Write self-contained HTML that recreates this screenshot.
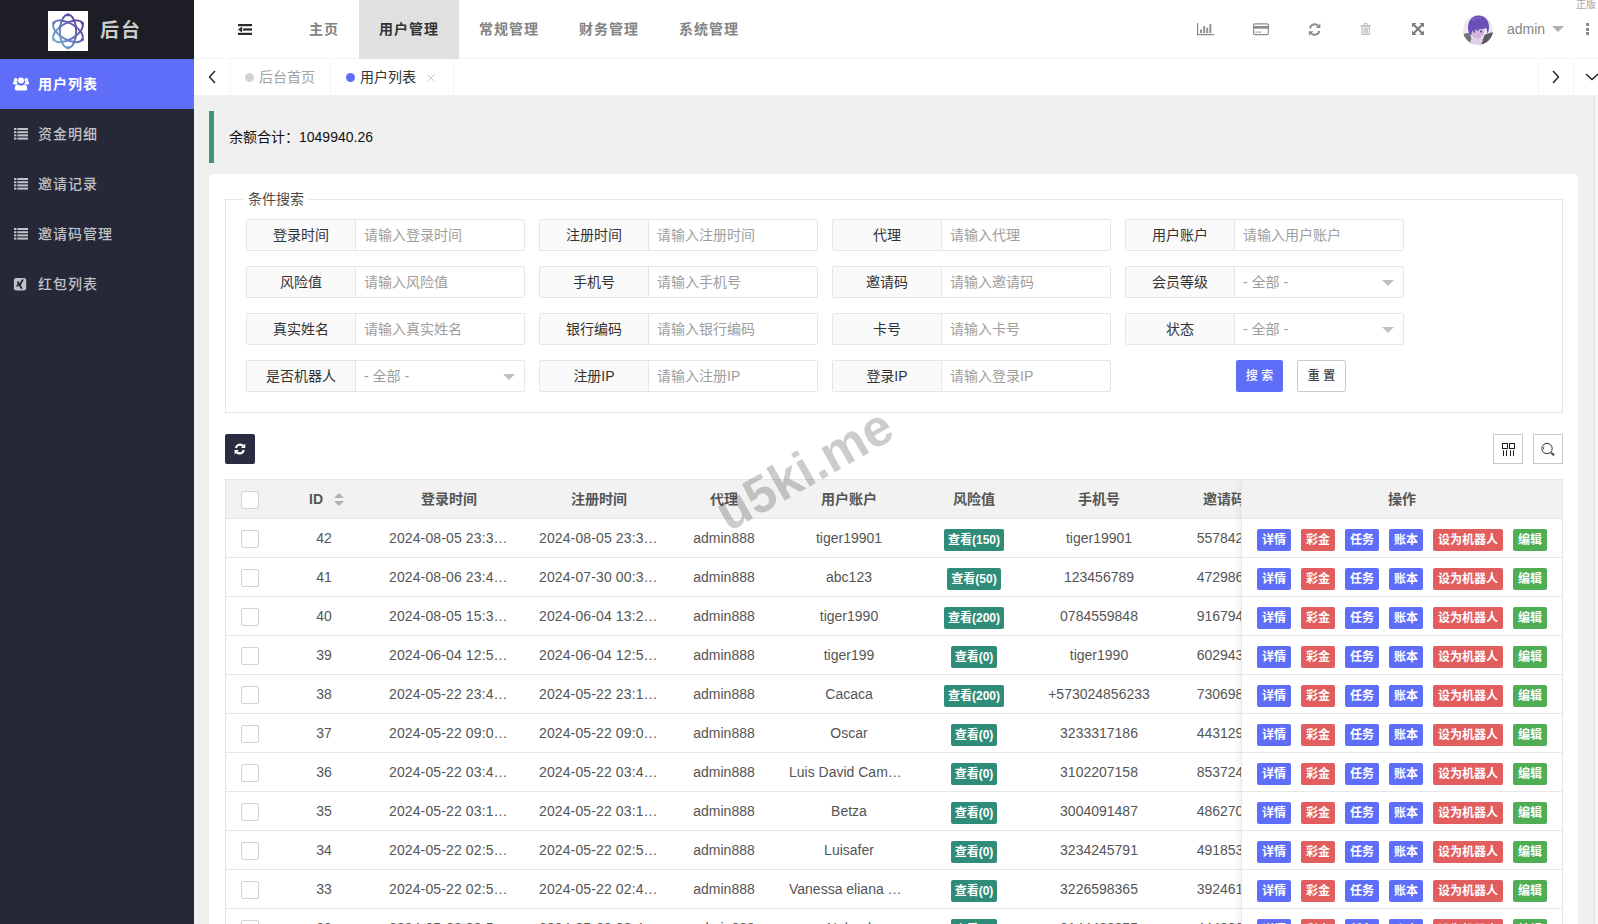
<!DOCTYPE html>
<html lang="zh-CN">
<head>
<meta charset="utf-8">
<title>后台</title>
<style>
*{box-sizing:border-box;margin:0;padding:0}
html,body{width:1598px;height:924px;overflow:hidden;background:#f0f0f0}
body{font-family:"Liberation Sans","Noto Sans CJK SC",sans-serif;font-size:14px;color:#333;position:relative}
svg{display:block;overflow:visible}
/* sidebar */
#side{position:absolute;left:0;top:0;width:194px;height:924px;background:#262837}
#logo{position:absolute;left:0;top:0;width:194px;height:59px;background:#1c1d25}
#logo .img{position:absolute;left:48px;top:11px;width:40px;height:40px;background:#fff}
#logo .txt{position:absolute;left:100px;top:1px;line-height:59px;font-size:19px;font-weight:bold;color:#cdcdcd;letter-spacing:2px}
.mi{position:absolute;left:0;width:194px;height:50px;line-height:50px;color:#c0c1c7;font-size:14px;font-weight:500;letter-spacing:1px;padding-left:38px}
.mi.on{background:#5f6ef8;color:#fff;font-weight:bold}
.mi svg{position:absolute;left:13px;top:17px}
/* header */
#head{position:absolute;left:194px;top:0;width:1415px;height:59px;background:#fff;border-bottom:1px solid #f4f4f4}
.nv{position:absolute;top:0;height:59px;line-height:58px;text-align:center;font-weight:bold;color:#838383;letter-spacing:1px;font-size:14px}
.nv.on{background:#e0e0e0;color:#333}
.hi{position:absolute;top:23px}
#avatar{position:absolute;left:1269px;top:15px;width:30px;height:30px;border-radius:50%;overflow:hidden}
#uname{position:absolute;left:1313px;top:0;line-height:58px;font-size:14px;color:#858585}
#ucaret{position:absolute;left:1358px;top:26px;width:0;height:0;border:6px solid transparent;border-top-color:#b0b0b0;border-bottom-width:0}
#more{position:absolute;left:1392px;top:23px;width:3px}
#more i{display:block;width:3px;height:3px;background:#8a8a8a;margin-bottom:1.5px}
#zb{position:absolute;left:1382px;top:-2px;font-size:10px;line-height:14px;color:#a5a5a5;white-space:nowrap}
#tabs{position:absolute;left:194px;top:59px;width:1415px;height:36px;background:#fff}
#tabs .cell{position:absolute;top:0;height:36px;line-height:36px;border-right:1px solid #f6f6f6;font-size:14px;white-space:nowrap}
#tabs .cell svg{position:absolute}
#tabs .dot{display:inline-block;width:9px;height:9px;border-radius:50%;vertical-align:middle;margin-right:5px;position:relative;top:-1px}
#tabs .x{position:absolute;left:91px;top:1px;font-size:13px;color:#c4c4c4}
/* content */
#quote{position:absolute;left:209px;top:111px;width:1369px;height:52px;border-left:5px solid #3d9580;line-height:52px;padding-left:15px;font-size:14px;color:#111}
#card{position:absolute;left:209px;top:174px;width:1369px;height:800px;background:#fff;border-radius:4px}
#fs{position:absolute;left:16px;top:25px;width:1338px;height:214px;border:1px solid #e6e6e6}
#fs .lg{position:absolute;left:17px;top:-11px;background:#fff;padding:0 5px;font-size:14px;line-height:20px;color:#4a4a4a}
.fi{position:absolute;width:279px;height:32px;border:1px solid #e6e6e6;border-radius:2px;background:#fff}
.fi .lb{position:absolute;left:0;top:0;width:109px;height:30px;line-height:30px;text-align:center;background:#fafafa;border-right:1px solid #e6e6e6;color:#333;font-size:14px}
.fi .ip{position:absolute;left:109px;top:0;width:168px;height:30px;line-height:30px;padding-left:8px;color:#9e9e9e;font-size:14px;white-space:nowrap}
.fi .ar{position:absolute;right:9px;top:13px;width:0;height:0;border:6px solid transparent;border-top-color:#c0c0c0;border-bottom-width:0}
.btn{position:absolute;height:32px;line-height:32px;text-align:center;font-size:12px;font-weight:500;border-radius:2px;white-space:nowrap}
.b1{background:#5f6ef8;color:#fff}
.b2{background:#fff;border:1px solid #c9c9c9;color:#444;line-height:30px}
/* toolbar */
#tools{position:absolute;left:16px;top:260px;width:1338px;height:30px}
#tools .rb{position:absolute;left:0;top:0;width:30px;height:30px;background:#2a2d42;border-radius:2px}
#tools .rb svg{position:absolute;left:8.800px;top:8.600px}
#tools .tb{position:absolute;top:0;width:30px;height:30px;border:1px solid #c9c9c9;background:#fff}
#tools .tb svg{position:absolute}
/* table */
#tbl{position:absolute;left:16px;top:305px;width:1338px;height:500px;border:1px solid #e6e6e6;border-right:0;overflow:hidden}
.th{position:absolute;left:0;top:0;width:1400px;height:39px;background:#f2f2f2;border-bottom:1px solid #e6e6e6;font-weight:bold;color:#555}
.tr{position:absolute;left:0;width:1400px;height:39px;border-bottom:1px solid #e6e6e6;color:#555}
.c{position:absolute;top:0;height:38px;line-height:38px;text-align:center;font-size:14px;white-space:nowrap;overflow:hidden}
.cb{display:inline-block;width:18px;height:18px;border:1px solid #d2d2d2;border-radius:2px;background:#fff;vertical-align:middle;position:relative;top:0}
.sort{display:inline-block;position:relative;width:10px;height:14px;margin-left:11px;vertical-align:middle;top:0}
.sort i{position:absolute;left:0;width:0;height:0;border:5px solid transparent}
.sort .u{top:-5px;border-bottom-color:#b2b2b2}
.sort .d{top:8px;border-top-color:#b2b2b2}
.xb{display:inline-block;height:22px;line-height:22px;padding:0 5px;font-size:12px;color:#fff;border-radius:2px;vertical-align:middle;font-weight:bold}
.tl{padding:0 4px;position:relative;top:1px}
.tl{background:#2f8c78}
.inv{padding-right:8px}
.c.tc{text-align:left;padding-left:15px}
.c.dt{letter-spacing:.12px}
.bl{background:#5f6ef8}
.rd{background:#e25d5d}
.gr{background:#4fae54}
#fix{position:absolute;left:1015px;top:0;width:322px;height:500px;background:#fff;border-left:1px solid #e6e6e6;border-right:1px solid #e6e6e6;box-shadow:-1px 0 8px rgba(0,0,0,.08)}
#fix .th,#fix .tr{width:320px}
.ops{position:absolute;left:15px;top:10px;height:22px;white-space:nowrap;font-size:0}
.ops .xb{margin-right:10px;display:inline-block;vertical-align:top}
#wm{position:absolute;left:654px;top:439px;width:300px;height:60px;line-height:60px;text-align:center;font-size:52px;font-weight:bold;color:rgba(0,0,0,.2);transform:rotate(-29.5deg);transform-origin:center center;white-space:nowrap}
#sbar{position:absolute;left:1594px;top:95px;width:4px;height:829px;background:#f7f7f7;border-left:1px solid #e4e4e4}
</style>
</head>
<body>
<div id="side">
  <div id="logo"><div class="img"><svg width="40" height="40" viewBox="0 0 40 40"><defs><linearGradient id="lg1" gradientUnits="userSpaceOnUse" x1="4" y1="36" x2="36" y2="6"><stop offset="0" stop-color="#7fc4d4"/><stop offset=".45" stop-color="#5f73bd"/><stop offset="1" stop-color="#5a3193"/></linearGradient><mask id="lm"><g fill="none" stroke="#fff" stroke-width="1.900"><ellipse cx="20" cy="20.300" rx="16.500" ry="8.200" transform="rotate(30 20 20.300)"/><ellipse cx="20" cy="20.300" rx="16.500" ry="8.200" transform="rotate(90 20 20.300)"/><ellipse cx="20" cy="20.300" rx="16.500" ry="8.200" transform="rotate(150 20 20.300)"/></g><g fill="#fff"><circle cx="20" cy="3.800" r="1.600"/><circle cx="34.300" cy="12" r="1.600"/><circle cx="34.300" cy="28.600" r="1.600"/><circle cx="20" cy="36.800" r="1.600"/><circle cx="5.700" cy="28.600" r="1.600"/><circle cx="5.700" cy="12" r="1.600"/></g></mask></defs><rect width="40" height="40" fill="url(#lg1)" mask="url(#lm)"/></svg></div><div class="txt">后台</div></div>
  <div class="mi on" style="top:59px"><svg width="16" height="16" viewBox="0 0 16 16"><g fill="#fff"><circle cx="8" cy="4.6" r="3"/><path d="M3.2 14.5c-.9 0-1.4-.5-1.4-1.4 0-2.6.8-4.6 2.6-4.6.5 0 1.8 1.2 3.6 1.2s3.100-1.200 3.600-1.200c1.800 0 2.600 2 2.600 4.600 0 .9-.5 1.400-1.400 1.400z"/><circle cx="2.700" cy="3.900" r="1.900"/><circle cx="13.300" cy="3.900" r="1.900"/><path d="M1.600 8.400c-1 0-1.600-.5-1.600-1.500 0-.9.400-1.700 1.300-1.700.3 0 .8.700 1.600.7.300 0 .600-.1.900-.2.100 1 .400 1.600.900 2.200-.9.050-1.500.300-1.900.5z"/><path d="M14.400 8.400c1 0 1.600-.5 1.600-1.500 0-.9-.4-1.700-1.300-1.700-.3 0-.8.700-1.600.7-.3 0-.600-.1-.900-.2-.1 1-.400 1.600-.900 2.200.9.050 1.500.300 1.900.5z"/></g></svg>用户列表</div>
  <div class="mi" style="top:109px"><svg width="16" height="16" viewBox="0 0 16 16"><g fill="#c2c3c9"><rect x="1" y="2" width="2.400" height="2"/><rect x="4.400" y="2" width="10.600" height="2"/><rect x="1" y="5.200" width="2.400" height="2"/><rect x="4.400" y="5.200" width="10.600" height="2"/><rect x="1" y="8.400" width="2.400" height="2"/><rect x="4.400" y="8.400" width="10.600" height="2"/><rect x="1" y="11.600" width="2.400" height="2"/><rect x="4.400" y="11.600" width="10.600" height="2"/></g></svg>资金明细</div>
  <div class="mi" style="top:159px"><svg width="16" height="16" viewBox="0 0 16 16"><g fill="#c2c3c9"><rect x="1" y="2" width="2.400" height="2"/><rect x="4.400" y="2" width="10.600" height="2"/><rect x="1" y="5.200" width="2.400" height="2"/><rect x="4.400" y="5.200" width="10.600" height="2"/><rect x="1" y="8.400" width="2.400" height="2"/><rect x="4.400" y="8.400" width="10.600" height="2"/><rect x="1" y="11.600" width="2.400" height="2"/><rect x="4.400" y="11.600" width="10.600" height="2"/></g></svg>邀请记录</div>
  <div class="mi" style="top:209px"><svg width="16" height="16" viewBox="0 0 16 16"><g fill="#c2c3c9"><rect x="1" y="2" width="2.400" height="2"/><rect x="4.400" y="2" width="10.600" height="2"/><rect x="1" y="5.200" width="2.400" height="2"/><rect x="4.400" y="5.200" width="10.600" height="2"/><rect x="1" y="8.400" width="2.400" height="2"/><rect x="4.400" y="8.400" width="10.600" height="2"/><rect x="1" y="11.600" width="2.400" height="2"/><rect x="4.400" y="11.600" width="10.600" height="2"/></g></svg>邀请码管理</div>
  <div class="mi" style="top:259px"><svg width="16" height="16" viewBox="0 0 16 16"><rect x="0.900" y="1.900" width="12.300" height="12.600" rx="2.300" fill="#c2c3c9"/><path d="M8.800 3.500h2.200l-3.200 5.600 2 3.600H7.600L5.600 9.100zM3.600 5.600h2.100l1.100 2-1.700 2.800H3l1.700-2.800z" fill="#262837"/></svg>红包列表</div>
</div>
<div id="head">
  <div class="hi" style="left:43px;top:23px"><svg width="16" height="14" viewBox="0 0 16 14"><g fill="#2b2b2b"><rect x="1" y="1" width="14" height="2.200"/><rect x="5.800" y="5.400" width="9.200" height="2.200"/><rect x="1" y="9.800" width="14" height="2.200"/><path d="M1 6.500L5 3.400v6.200z"/></g></svg></div>
  <div class="nv" style="left:95px;width:70px">主页</div>
  <div class="nv on" style="left:165px;width:100px">用户管理</div>
  <div class="nv" style="left:265px;width:100px">常规管理</div>
  <div class="nv" style="left:365px;width:100px">财务管理</div>
  <div class="nv" style="left:465px;width:100px">系统管理</div>
  <div class="hi" style="left:1003px"><svg width="18" height="14" viewBox="0 0 18 14"><g fill="#8c8c8c"><path d="M0 0h1.200v11h15.800v1.200H0z"/><rect x="3.100" y="6.400" width="1.900" height="3.700"/><rect x="6.200" y="3.100" width="1.900" height="7"/><rect x="9.300" y="4.700" width="1.900" height="5.400"/><rect x="12.400" y="1.200" width="1.900" height="8.900"/></g></svg></div>
  <div class="hi" style="left:1059px"><svg width="18" height="14" viewBox="0 0 18 14"><rect x="0.600" y="0.800" width="14.800" height="10.800" rx="1.300" fill="none" stroke="#8c8c8c" stroke-width="1.200"/><rect x="0.600" y="3" width="14.800" height="2.700" fill="#8c8c8c"/><rect x="2.500" y="8.600" width="1.800" height="1" fill="#8c8c8c"/><rect x="5.200" y="8.600" width="2.800" height="1" fill="#8c8c8c"/></svg></div>
  <div class="hi" style="left:1114px"><svg width="14" height="14" viewBox="0 0 14 14"><g fill="none" stroke="#8c8c8c" stroke-width="2"><path d="M2 5.400A4.700 4.700 0 0 1 10.200 3"/><path d="M11.200 7.800A4.700 4.700 0 0 1 3 10.200"/></g><path d="M12.400 0.500v4.600H7.800z" fill="#8c8c8c"/><path d="M0.800 12.800V8.200h4.600z" fill="#8c8c8c"/></svg></div>
  <div class="hi" style="left:1166px"><svg width="14" height="14" viewBox="0 0 14 14"><g fill="#bdbdbd"><path d="M0.400 2h10.600v1.200H0.400z"/><path d="M3.700 2V0.900C3.700 0.400 4 0 4.500 0h2.400c.5 0 .8.400.8.900V2H6.700V1H4.700v1z"/><path d="M1.400 3.200h8.600v7.600c0 .7-.4 1.200-1.100 1.200H2.500c-.7 0-1.100-.5-1.100-1.200zM2.500 4.300v6.500h6.400V4.300z"/><path d="M3.300 4.800h4.800v5.500H3.300z" opacity=".75"/></g></svg></div>
  <div class="hi" style="left:1217.5px"><svg width="12" height="12" viewBox="0 0 12 12"><g fill="#7c7c7c"><path d="M0 0h4.500L0 4.500z"/><path d="M12 0H7.500L12 4.500z"/><path d="M0 12h4.500L0 7.500z"/><path d="M12 12H7.500L12 7.500z"/></g><path d="M1.800 1.800l8.400 8.400M10.200 1.800l-8.400 8.400" stroke="#7c7c7c" stroke-width="2.100" fill="none"/></svg></div>
  <div id="avatar"><svg width="30" height="30" viewBox="0 0 30 30"><rect width="30" height="30" fill="#ece8f0"/><path d="M0 19l7-1.500 3 12.500H0z" fill="#77717d"/><path d="M30 17l-8 2.500-5 10.500h13z" fill="#5f5a66"/><path d="M7 30c0-5 2-8 6.500-8 3 0 5 1 6.500 3l-2 5z" fill="#ddd0ea"/><ellipse cx="14.500" cy="16.500" rx="6.800" ry="7.200" fill="#d2b6dc"/><path d="M5 14C4.500 6 9 .5 15.500.500 22 .500 26.500 5.500 26 13c-.200 2.500-.800 4.500-1.800 6 .100-2.500-.300-4.500-1.200-6-2 1-4.200 1.300-6.500.800-.300 1.200-1.400 2.200-2.800 2.400.300-.700.300-1.400.100-2-1.500 1.100-3 1.500-4.300 1.500-.900 1.500-1.100 3.200-.900 4.800C6.500 18.500 5.200 16.500 5 14z" fill="#6a4fb8"/><path d="M9 6c2-3 6-4 10-2.500" stroke="#7d63c8" stroke-width="1.500" fill="none"/><ellipse cx="11.200" cy="16.600" rx=".9" ry="1.100" fill="#4a3a7a"/><ellipse cx="18" cy="16.600" rx=".9" ry="1.100" fill="#4a3a7a"/></svg></div>
  <div id="uname">admin</div><div id="ucaret"></div>
  <div id="more"><i></i><i></i><i></i></div>
  <div id="zb">正版</div>
</div>
<div id="tabs">
  <div class="cell" style="left:0;width:37px"><svg width="8" height="14" viewBox="0 0 8 14" style="left:14px;top:11px"><path d="M7 1L1.500 7 7 13" fill="none" stroke="#222" stroke-width="1.400"/></svg></div>
  <div class="cell" style="left:37px;width:100px;padding-left:14px;color:#a3a3a3"><span class="dot" style="background:#d2d2d2"></span>后台首页</div>
  <div class="cell" style="left:137px;width:123px;padding-left:15px;color:#333"><span class="dot" style="background:#5f6ef8"></span>用户列表<svg width="8" height="8" viewBox="0 0 8 8" style="left:96px;top:15px"><path d="M.5.500l7 7M7.500.500l-7 7" fill="none" stroke="#c8c8c8" stroke-width="1"/></svg></div>
  <div class="cell" style="left:1344px;width:36px;border-left:1px solid #f6f6f6"><svg width="8" height="14" viewBox="0 0 8 14" style="left:13px;top:11px"><path d="M1 1l5.500 6L1 13" fill="none" stroke="#222" stroke-width="1.400"/></svg></div>
  <div class="cell" style="left:1380px;width:36px;border-right:0"><svg width="14" height="8" viewBox="0 0 14 8" style="left:11px;top:14px"><path d="M1 1l6 5.500L13 1" fill="none" stroke="#222" stroke-width="1.400"/></svg></div>
</div>
<div id="quote">余额合计：1049940.26</div>
<div id="card">
  <div id="fs"><div class="lg">条件搜索</div>
    <div class="fi" style="left:20px;top:19px"><div class="lb">登录时间</div><div class="ip">请输入登录时间</div></div>
    <div class="fi" style="left:313px;top:19px"><div class="lb">注册时间</div><div class="ip">请输入注册时间</div></div>
    <div class="fi" style="left:606px;top:19px"><div class="lb">代理</div><div class="ip">请输入代理</div></div>
    <div class="fi" style="left:899px;top:19px"><div class="lb">用户账户</div><div class="ip">请输入用户账户</div></div>
    <div class="fi" style="left:20px;top:66px"><div class="lb">风险值</div><div class="ip">请输入风险值</div></div>
    <div class="fi" style="left:313px;top:66px"><div class="lb">手机号</div><div class="ip">请输入手机号</div></div>
    <div class="fi" style="left:606px;top:66px"><div class="lb">邀请码</div><div class="ip">请输入邀请码</div></div>
    <div class="fi" style="left:899px;top:66px"><div class="lb">会员等级</div><div class="ip">- 全部 -</div><div class="ar"></div></div>
    <div class="fi" style="left:20px;top:113px"><div class="lb">真实姓名</div><div class="ip">请输入真实姓名</div></div>
    <div class="fi" style="left:313px;top:113px"><div class="lb">银行编码</div><div class="ip">请输入银行编码</div></div>
    <div class="fi" style="left:606px;top:113px"><div class="lb">卡号</div><div class="ip">请输入卡号</div></div>
    <div class="fi" style="left:899px;top:113px"><div class="lb">状态</div><div class="ip">- 全部 -</div><div class="ar"></div></div>
    <div class="fi" style="left:20px;top:160px"><div class="lb">是否机器人</div><div class="ip">- 全部 -</div><div class="ar"></div></div>
    <div class="fi" style="left:313px;top:160px"><div class="lb">注册IP</div><div class="ip">请输入注册IP</div></div>
    <div class="fi" style="left:606px;top:160px"><div class="lb">登录IP</div><div class="ip">请输入登录IP</div></div>
    <div class="btn b1" style="left:1010px;top:160px;width:47px">搜 索</div>
    <div class="btn b2" style="left:1071px;top:160px;width:49px">重 置</div>
  </div>
  <div id="tools"><div class="rb"><svg width="12.500" height="12.500" viewBox="0 0 14 14"><g fill="none" stroke="#fff" stroke-width="2.500"><path d="M2.200 5.600A4.700 4.700 0 0 1 10.200 3.200"/><path d="M11 7.800A4.700 4.700 0 0 1 3 10.200"/></g><path d="M12.600 0.600v4.900H7.700z" fill="#fff"/><path d="M0.600 12.800V7.900h4.900z" fill="#fff"/></svg></div><div class="tb" style="left:1268px"><svg width="14" height="14" viewBox="0 0 14 14" style="left:8px;top:8px"><g fill="none" stroke="#1e1e1e" stroke-width="1"><rect x="0.500" y="0.500" width="5" height="5"/><rect x="7.500" y="0.500" width="5" height="5"/><path d="M1.500 7.300v5.700M4.500 7.300v5.700M8.500 7.300v5.700M11.500 7.300v5.700"/></g></svg></div><div class="tb" style="left:1308px"><svg width="16" height="16" viewBox="0 0 16 16" style="left:6px;top:7px"><g fill="none" stroke="#333" stroke-width="1"><circle cx="7" cy="6.500" r="5.200"/><path d="M3.700 5.200c-.3.700-.3 1.500 0 2.200"/><path d="M11 10.700l3.200 2.600" stroke-width="2" stroke="#444"/></g></svg></div></div>
  <div id="tbl">
    <div class="th">
      <div class="c" style="left:0px;width:48px"><span class="cb"></span></div>
      <div class="c" style="left:48px;width:100px;padding-left:5px">ID<span class="sort"><i class="u"></i><i class="d"></i></span></div>
      <div class="c" style="left:148px;width:150px">登录时间</div>
      <div class="c" style="left:298px;width:150px">注册时间</div>
      <div class="c" style="left:448px;width:100px">代理</div>
      <div class="c" style="left:548px;width:150px">用户账户</div>
      <div class="c" style="left:698px;width:100px">风险值</div>
      <div class="c" style="left:798px;width:150px">手机号</div>
      <div class="c" style="left:948px;width:100px">邀请码</div>
    </div>
    <div class="tr" style="top:39px">
      <div class="c" style="left:0;width:48px"><span class="cb"></span></div><div class="c" style="left:48px;width:100px">42</div><div class="c tc dt" style="left:148px;width:150px">2024-08-05 23:3…</div><div class="c tc dt" style="left:298px;width:150px">2024-08-05 23:3…</div><div class="c" style="left:448px;width:100px">admin888</div><div class="c" style="left:548px;width:150px">tiger19901</div><div class="c" style="left:698px;width:100px"><span class="xb tl">查看(150)</span></div><div class="c" style="left:798px;width:150px">tiger19901</div><div class="c inv" style="left:948px;width:100px">557842</div>
    </div>
    <div class="tr" style="top:78px">
      <div class="c" style="left:0;width:48px"><span class="cb"></span></div><div class="c" style="left:48px;width:100px">41</div><div class="c tc dt" style="left:148px;width:150px">2024-08-06 23:4…</div><div class="c tc dt" style="left:298px;width:150px">2024-07-30 00:3…</div><div class="c" style="left:448px;width:100px">admin888</div><div class="c" style="left:548px;width:150px">abc123</div><div class="c" style="left:698px;width:100px"><span class="xb tl">查看(50)</span></div><div class="c" style="left:798px;width:150px">123456789</div><div class="c inv" style="left:948px;width:100px">472986</div>
    </div>
    <div class="tr" style="top:117px">
      <div class="c" style="left:0;width:48px"><span class="cb"></span></div><div class="c" style="left:48px;width:100px">40</div><div class="c tc dt" style="left:148px;width:150px">2024-08-05 15:3…</div><div class="c tc dt" style="left:298px;width:150px">2024-06-04 13:2…</div><div class="c" style="left:448px;width:100px">admin888</div><div class="c" style="left:548px;width:150px">tiger1990</div><div class="c" style="left:698px;width:100px"><span class="xb tl">查看(200)</span></div><div class="c" style="left:798px;width:150px">0784559848</div><div class="c inv" style="left:948px;width:100px">916794</div>
    </div>
    <div class="tr" style="top:156px">
      <div class="c" style="left:0;width:48px"><span class="cb"></span></div><div class="c" style="left:48px;width:100px">39</div><div class="c tc dt" style="left:148px;width:150px">2024-06-04 12:5…</div><div class="c tc dt" style="left:298px;width:150px">2024-06-04 12:5…</div><div class="c" style="left:448px;width:100px">admin888</div><div class="c" style="left:548px;width:150px">tiger199</div><div class="c" style="left:698px;width:100px"><span class="xb tl">查看(0)</span></div><div class="c" style="left:798px;width:150px">tiger1990</div><div class="c inv" style="left:948px;width:100px">602943</div>
    </div>
    <div class="tr" style="top:195px">
      <div class="c" style="left:0;width:48px"><span class="cb"></span></div><div class="c" style="left:48px;width:100px">38</div><div class="c tc dt" style="left:148px;width:150px">2024-05-22 23:4…</div><div class="c tc dt" style="left:298px;width:150px">2024-05-22 23:1…</div><div class="c" style="left:448px;width:100px">admin888</div><div class="c" style="left:548px;width:150px">Cacaca</div><div class="c" style="left:698px;width:100px"><span class="xb tl">查看(200)</span></div><div class="c" style="left:798px;width:150px">+573024856233</div><div class="c inv" style="left:948px;width:100px">730698</div>
    </div>
    <div class="tr" style="top:234px">
      <div class="c" style="left:0;width:48px"><span class="cb"></span></div><div class="c" style="left:48px;width:100px">37</div><div class="c tc dt" style="left:148px;width:150px">2024-05-22 09:0…</div><div class="c tc dt" style="left:298px;width:150px">2024-05-22 09:0…</div><div class="c" style="left:448px;width:100px">admin888</div><div class="c" style="left:548px;width:150px">Oscar</div><div class="c" style="left:698px;width:100px"><span class="xb tl">查看(0)</span></div><div class="c" style="left:798px;width:150px">3233317186</div><div class="c inv" style="left:948px;width:100px">443129</div>
    </div>
    <div class="tr" style="top:273px">
      <div class="c" style="left:0;width:48px"><span class="cb"></span></div><div class="c" style="left:48px;width:100px">36</div><div class="c tc dt" style="left:148px;width:150px">2024-05-22 03:4…</div><div class="c tc dt" style="left:298px;width:150px">2024-05-22 03:4…</div><div class="c" style="left:448px;width:100px">admin888</div><div class="c tc" style="left:548px;width:150px">Luis David Cam…</div><div class="c" style="left:698px;width:100px"><span class="xb tl">查看(0)</span></div><div class="c" style="left:798px;width:150px">3102207158</div><div class="c inv" style="left:948px;width:100px">853724</div>
    </div>
    <div class="tr" style="top:312px">
      <div class="c" style="left:0;width:48px"><span class="cb"></span></div><div class="c" style="left:48px;width:100px">35</div><div class="c tc dt" style="left:148px;width:150px">2024-05-22 03:1…</div><div class="c tc dt" style="left:298px;width:150px">2024-05-22 03:1…</div><div class="c" style="left:448px;width:100px">admin888</div><div class="c" style="left:548px;width:150px">Betza</div><div class="c" style="left:698px;width:100px"><span class="xb tl">查看(0)</span></div><div class="c" style="left:798px;width:150px">3004091487</div><div class="c inv" style="left:948px;width:100px">486270</div>
    </div>
    <div class="tr" style="top:351px">
      <div class="c" style="left:0;width:48px"><span class="cb"></span></div><div class="c" style="left:48px;width:100px">34</div><div class="c tc dt" style="left:148px;width:150px">2024-05-22 02:5…</div><div class="c tc dt" style="left:298px;width:150px">2024-05-22 02:5…</div><div class="c" style="left:448px;width:100px">admin888</div><div class="c" style="left:548px;width:150px">Luisafer</div><div class="c" style="left:698px;width:100px"><span class="xb tl">查看(0)</span></div><div class="c" style="left:798px;width:150px">3234245791</div><div class="c inv" style="left:948px;width:100px">491853</div>
    </div>
    <div class="tr" style="top:390px">
      <div class="c" style="left:0;width:48px"><span class="cb"></span></div><div class="c" style="left:48px;width:100px">33</div><div class="c tc dt" style="left:148px;width:150px">2024-05-22 02:5…</div><div class="c tc dt" style="left:298px;width:150px">2024-05-22 02:4…</div><div class="c" style="left:448px;width:100px">admin888</div><div class="c tc" style="left:548px;width:150px">Vanessa eliana …</div><div class="c" style="left:698px;width:100px"><span class="xb tl">查看(0)</span></div><div class="c" style="left:798px;width:150px">3226598365</div><div class="c inv" style="left:948px;width:100px">392461</div>
    </div>
    <div class="tr" style="top:429px">
      <div class="c" style="left:0;width:48px"><span class="cb"></span></div><div class="c" style="left:48px;width:100px">32</div><div class="c tc dt" style="left:148px;width:150px">2024-05-22 02:5…</div><div class="c tc dt" style="left:298px;width:150px">2024-05-22 02:4…</div><div class="c" style="left:448px;width:100px">admin888</div><div class="c" style="left:548px;width:150px">Nahuel</div><div class="c" style="left:698px;width:100px"><span class="xb tl">查看(0)</span></div><div class="c" style="left:798px;width:150px">3144466255</div><div class="c inv" style="left:948px;width:100px">444236</div>
    </div>
    <div id="fix">
      <div class="th"><div class="c" style="left:0;width:320px">操作</div></div>
      <div class="tr" style="top:39px"><div class="ops"><span class="xb bl">详情</span><span class="xb rd">彩金</span><span class="xb bl">任务</span><span class="xb bl">账本</span><span class="xb rd">设为机器人</span><span class="xb gr">编辑</span></div></div>
      <div class="tr" style="top:78px"><div class="ops"><span class="xb bl">详情</span><span class="xb rd">彩金</span><span class="xb bl">任务</span><span class="xb bl">账本</span><span class="xb rd">设为机器人</span><span class="xb gr">编辑</span></div></div>
      <div class="tr" style="top:117px"><div class="ops"><span class="xb bl">详情</span><span class="xb rd">彩金</span><span class="xb bl">任务</span><span class="xb bl">账本</span><span class="xb rd">设为机器人</span><span class="xb gr">编辑</span></div></div>
      <div class="tr" style="top:156px"><div class="ops"><span class="xb bl">详情</span><span class="xb rd">彩金</span><span class="xb bl">任务</span><span class="xb bl">账本</span><span class="xb rd">设为机器人</span><span class="xb gr">编辑</span></div></div>
      <div class="tr" style="top:195px"><div class="ops"><span class="xb bl">详情</span><span class="xb rd">彩金</span><span class="xb bl">任务</span><span class="xb bl">账本</span><span class="xb rd">设为机器人</span><span class="xb gr">编辑</span></div></div>
      <div class="tr" style="top:234px"><div class="ops"><span class="xb bl">详情</span><span class="xb rd">彩金</span><span class="xb bl">任务</span><span class="xb bl">账本</span><span class="xb rd">设为机器人</span><span class="xb gr">编辑</span></div></div>
      <div class="tr" style="top:273px"><div class="ops"><span class="xb bl">详情</span><span class="xb rd">彩金</span><span class="xb bl">任务</span><span class="xb bl">账本</span><span class="xb rd">设为机器人</span><span class="xb gr">编辑</span></div></div>
      <div class="tr" style="top:312px"><div class="ops"><span class="xb bl">详情</span><span class="xb rd">彩金</span><span class="xb bl">任务</span><span class="xb bl">账本</span><span class="xb rd">设为机器人</span><span class="xb gr">编辑</span></div></div>
      <div class="tr" style="top:351px"><div class="ops"><span class="xb bl">详情</span><span class="xb rd">彩金</span><span class="xb bl">任务</span><span class="xb bl">账本</span><span class="xb rd">设为机器人</span><span class="xb gr">编辑</span></div></div>
      <div class="tr" style="top:390px"><div class="ops"><span class="xb bl">详情</span><span class="xb rd">彩金</span><span class="xb bl">任务</span><span class="xb bl">账本</span><span class="xb rd">设为机器人</span><span class="xb gr">编辑</span></div></div>
      <div class="tr" style="top:429px"><div class="ops"><span class="xb bl">详情</span><span class="xb rd">彩金</span><span class="xb bl">任务</span><span class="xb bl">账本</span><span class="xb rd">设为机器人</span><span class="xb gr">编辑</span></div></div>
    </div>
  </div>
</div>
<div id="wm">u5ki.me</div>
<div id="sbar"></div>
</body>
</html>
